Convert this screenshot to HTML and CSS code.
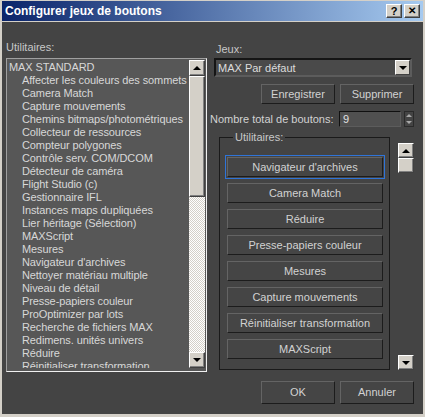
FILE: index.html
```html
<!DOCTYPE html>
<html lang="fr">
<head>
  <meta charset="UTF-8">
  <title>Configurer jeux de boutons</title>
  <link rel="stylesheet" href="styles.css">
</head>
<body>
  <div class="window">
    <div class="titlebar">
      <span class="title">Configurer jeux de boutons</span>
      <span class="tb-btn">?</span>
      <span class="tb-btn close">✕</span>
    </div>

    <div class="content">
      <div class="left">
        <div class="label">Utilitaires:</div>
        <div class="listbox">
          <ul class="items">
            <li class="group">MAX STANDARD</li>
            <li>Affecter les couleurs des sommets</li>
            <li>Camera Match</li>
            <li>Capture mouvements</li>
            <li>Chemins bitmaps/photométriques</li>
            <li>Collecteur de ressources</li>
            <li>Compteur polygones</li>
            <li>Contrôle serv. COM/DCOM</li>
            <li>Détecteur de caméra</li>
            <li>Flight Studio (c)</li>
            <li>Gestionnaire IFL</li>
            <li>Instances maps dupliquées</li>
            <li>Lier héritage (Sélection)</li>
            <li>MAXScript</li>
            <li>Mesures</li>
            <li>Navigateur d'archives</li>
            <li>Nettoyer matériau multiple</li>
            <li>Niveau de détail</li>
            <li>Presse-papiers couleur</li>
            <li>ProOptimizer par lots</li>
            <li>Recherche de fichiers MAX</li>
            <li>Redimens. unités univers</li>
            <li>Réduire</li>
            <li>Réinitialiser transformation</li>
          </ul>
          <div class="vscroll">
            <div class="sb-btn"><span class="arrow up"></span></div>
            <div class="sb-thumb"></div>
            <div class="sb-track"></div>
            <div class="sb-btn"><span class="arrow down"></span></div>
          </div>
        </div>
      </div>

      <div class="right">
        <div class="label jeux">Jeux:</div>
        <div class="combo">
          <span class="combo-text">MAX Par défaut</span>
          <span class="combo-btn"><span class="arrow down"></span></span>
        </div>

        <div class="btn-row">
          <div class="btn">Enregistrer</div>
          <div class="btn">Supprimer</div>
        </div>

        <div class="count-row">
          <span class="count-label">Nombre total de boutons:</span>
          <span class="field">9</span>
          <span class="spinner">
            <span class="spin-arrow up"></span>
            <span class="spin-arrow down"></span>
          </span>
        </div>

        <div class="group-row">
          <fieldset class="groupbox">
            <legend>Utilitaires:</legend>
            <div class="btn tool focused">Navigateur d'archives</div>
            <div class="btn tool">Camera Match</div>
            <div class="btn tool">Réduire</div>
            <div class="btn tool">Presse-papiers couleur</div>
            <div class="btn tool">Mesures</div>
            <div class="btn tool">Capture mouvements</div>
            <div class="btn tool">Réinitialiser transformation</div>
            <div class="btn tool">MAXScript</div>
          </fieldset>
          <div class="side-scroll">
            <div class="sb-btn big"><span class="arrow up"></span></div>
            <div class="sb-btn big"></div>
            <div class="spacer"></div>
            <div class="sb-btn big"><span class="arrow down"></span></div>
          </div>
        </div>

        <div class="btn-row bottom">
          <div class="btn">OK</div>
          <div class="btn">Annuler</div>
        </div>
      </div>
    </div>
  </div>
</body>
</html>
```

FILE: styles.css
```css
body {
  margin: 0;
  font-family: "Liberation Sans", Arial, sans-serif;
  font-size: 11px;
  background: #444;
}

.window {
  width: 425px;
  height: 417px;
  box-sizing: border-box;
  background: #444;
  border-top: 1px solid #d4d0c8;
  border-left: 2px solid #d4d0c8;
  border-right: 2px solid #d4d0c8;
  border-bottom: 3px solid #d4d0c8;
  display: flex;
  flex-direction: column;
}

.titlebar {
  height: 20px;
  display: flex;
  align-items: center;
  padding: 0 3px 0 3px;
  background: linear-gradient(to right, #0a246a, #a6caf0);
  border-bottom: 1px solid #d4d0c8;
  flex-shrink: 0;
}

.title {
  flex: 1;
  color: #fff;
  font-weight: bold;
  font-size: 12px;
}

.tb-btn {
  width: 16px;
  height: 14px;
  box-sizing: border-box;
  margin-left: 2px;
  background: #d4d0c8;
  border: 1px solid;
  border-color: #fff #404040 #404040 #fff;
  box-shadow: inset -1px -1px 0 #808080;
  font-weight: bold;
  font-size: 11px;
  line-height: 12px;
  text-align: center;
  color: #000;
}

.tb-btn.close {
  font-size: 10px;
}

.content {
  display: flex;
  padding: 19px 0 0 4px;
  color: #d2d2d2;
}

.label {
  height: 13px;
  line-height: 13px;
  color: #c8c8c8;
}

/* liste de gauche */
.left {
  width: 201px;
}

.listbox {
  margin-top: 4px;
  height: 314px;
  box-sizing: border-box;
  border: 1px solid;
  border-color: #a0a0a0 #f0f0f0 #f0f0f0 #a0a0a0;
  background: #575757;
  display: flex;
  padding: 1px 1px 3px 0;
}

.items {
  flex: 1;
  list-style: none;
  margin: 0;
  padding: 1px 0 0 2px;
  overflow: hidden;
  white-space: nowrap;
  letter-spacing: -0.1px;
}

.items li {
  height: 13px;
  line-height: 13px;
  padding-left: 13px;
  color: #d8d8d8;
}

.items li.group {
  padding-left: 0;
}

.vscroll {
  width: 16px;
  display: flex;
  flex-direction: column;
}

.sb-btn {
  height: 16px;
  box-sizing: border-box;
  background: #d4d0c8;
  border: 1px solid;
  border-color: #fff #404040 #404040 #fff;
  box-shadow: inset -1px -1px 0 #808080;
  display: flex;
  align-items: center;
  justify-content: center;
  flex-shrink: 0;
}

.sb-thumb {
  height: 121px;
  box-sizing: border-box;
  background: #d4d0c8;
  border: 1px solid;
  border-color: #fff #404040 #404040 #fff;
  box-shadow: inset -1px -1px 0 #808080;
}

.sb-track {
  flex: 1;
  background: repeating-conic-gradient(#fff 0 25%, #d4d0c8 0 50%) 0 0 / 2px 2px;
}

.arrow {
  width: 0;
  height: 0;
  border-left: 4px solid transparent;
  border-right: 4px solid transparent;
}

.arrow.up {
  border-bottom: 4px solid #000;
}

.arrow.down {
  border-top: 4px solid #000;
}

/* colonne de droite */
.right {
  width: 204px;
  margin-left: 3px;
  padding-top: 1px;
}

.label.jeux {
  margin: 1px 0 0 6px;
}

.combo {
  margin: 2px 2px 0 4px;
  height: 19px;
  box-sizing: border-box;
  background: #4a4a4a;
  border: 2px solid;
  border-color: #151515 #5c5c5c #5c5c5c #151515;
  display: flex;
  align-items: center;
}

.combo-text {
  flex: 1;
  padding-left: 2px;
  color: #dcdcdc;
}

.combo-btn {
  width: 15px;
  height: 15px;
  box-sizing: border-box;
  background: #d4d0c8;
  border: 1px solid;
  border-color: #fff #404040 #404040 #fff;
  display: flex;
  align-items: center;
  justify-content: center;
}

.btn-row {
  display: flex;
  justify-content: flex-end;
  gap: 5px;
  margin-top: 7px;
}

.btn {
  width: 74px;
  height: 20px;
  box-sizing: border-box;
  border: 1px solid;
  border-color: #646464 #1c1c1c #1c1c1c #646464;
  background: #454545;
  color: #d2d2d2;
  line-height: 18px;
  text-align: center;
  white-space: nowrap;
}

.count-row {
  display: flex;
  align-items: center;
  margin-top: 7px;
  height: 16px;
}

.count-label {
  width: 129px;
  color: #d2d2d2;
}

.field {
  width: 62px;
  height: 16px;
  box-sizing: border-box;
  border: 1px solid;
  border-color: #101010 #5c5c5c #5c5c5c #101010;
  background: #505050;
  padding-left: 3px;
  line-height: 14px;
  color: #e0e0e0;
}

.spinner {
  margin-left: 3px;
  width: 10px;
  height: 16px;
  display: flex;
  flex-direction: column;
  justify-content: space-around;
  align-items: center;
  border: 1px solid #2a2a2a;
  box-sizing: border-box;
}

.spin-arrow {
  width: 0;
  height: 0;
  border-left: 3px solid transparent;
  border-right: 3px solid transparent;
}

.spin-arrow.up {
  border-bottom: 3px solid #a8a8a8;
}

.spin-arrow.down {
  border-top: 3px solid #a8a8a8;
}

.group-row {
  display: flex;
  margin-top: 5px;
  height: 238px;
}

.groupbox {
  margin: 0 0 0 9px;
  width: 171px;
  box-sizing: border-box;
  border: 1px solid #1a1a1a;
  padding: 14px 0 0 7px;
  display: flex;
  flex-direction: column;
  gap: 6px;
}

.groupbox legend {
  padding: 0 2px;
  margin-left: 6px;
  color: #c8c8c8;
  line-height: 11px;
}

.btn.tool {
  width: 156px;
  height: 20px;
}

.btn.tool.focused {
  outline: 1px solid #2f74d8;
  outline-offset: 1px;
}

.side-scroll {
  margin-left: 8px;
  padding: 11px 0 0 0;
  width: 16px;
  display: flex;
  flex-direction: column;
}

.sb-btn.big {
  height: 15px;
}

.side-scroll .spacer {
  flex: 1;
}

.btn-row.bottom {
  margin-top: 11px;
}

.btn-row.bottom .btn {
  height: 23px;
  line-height: 21px;
}
```
